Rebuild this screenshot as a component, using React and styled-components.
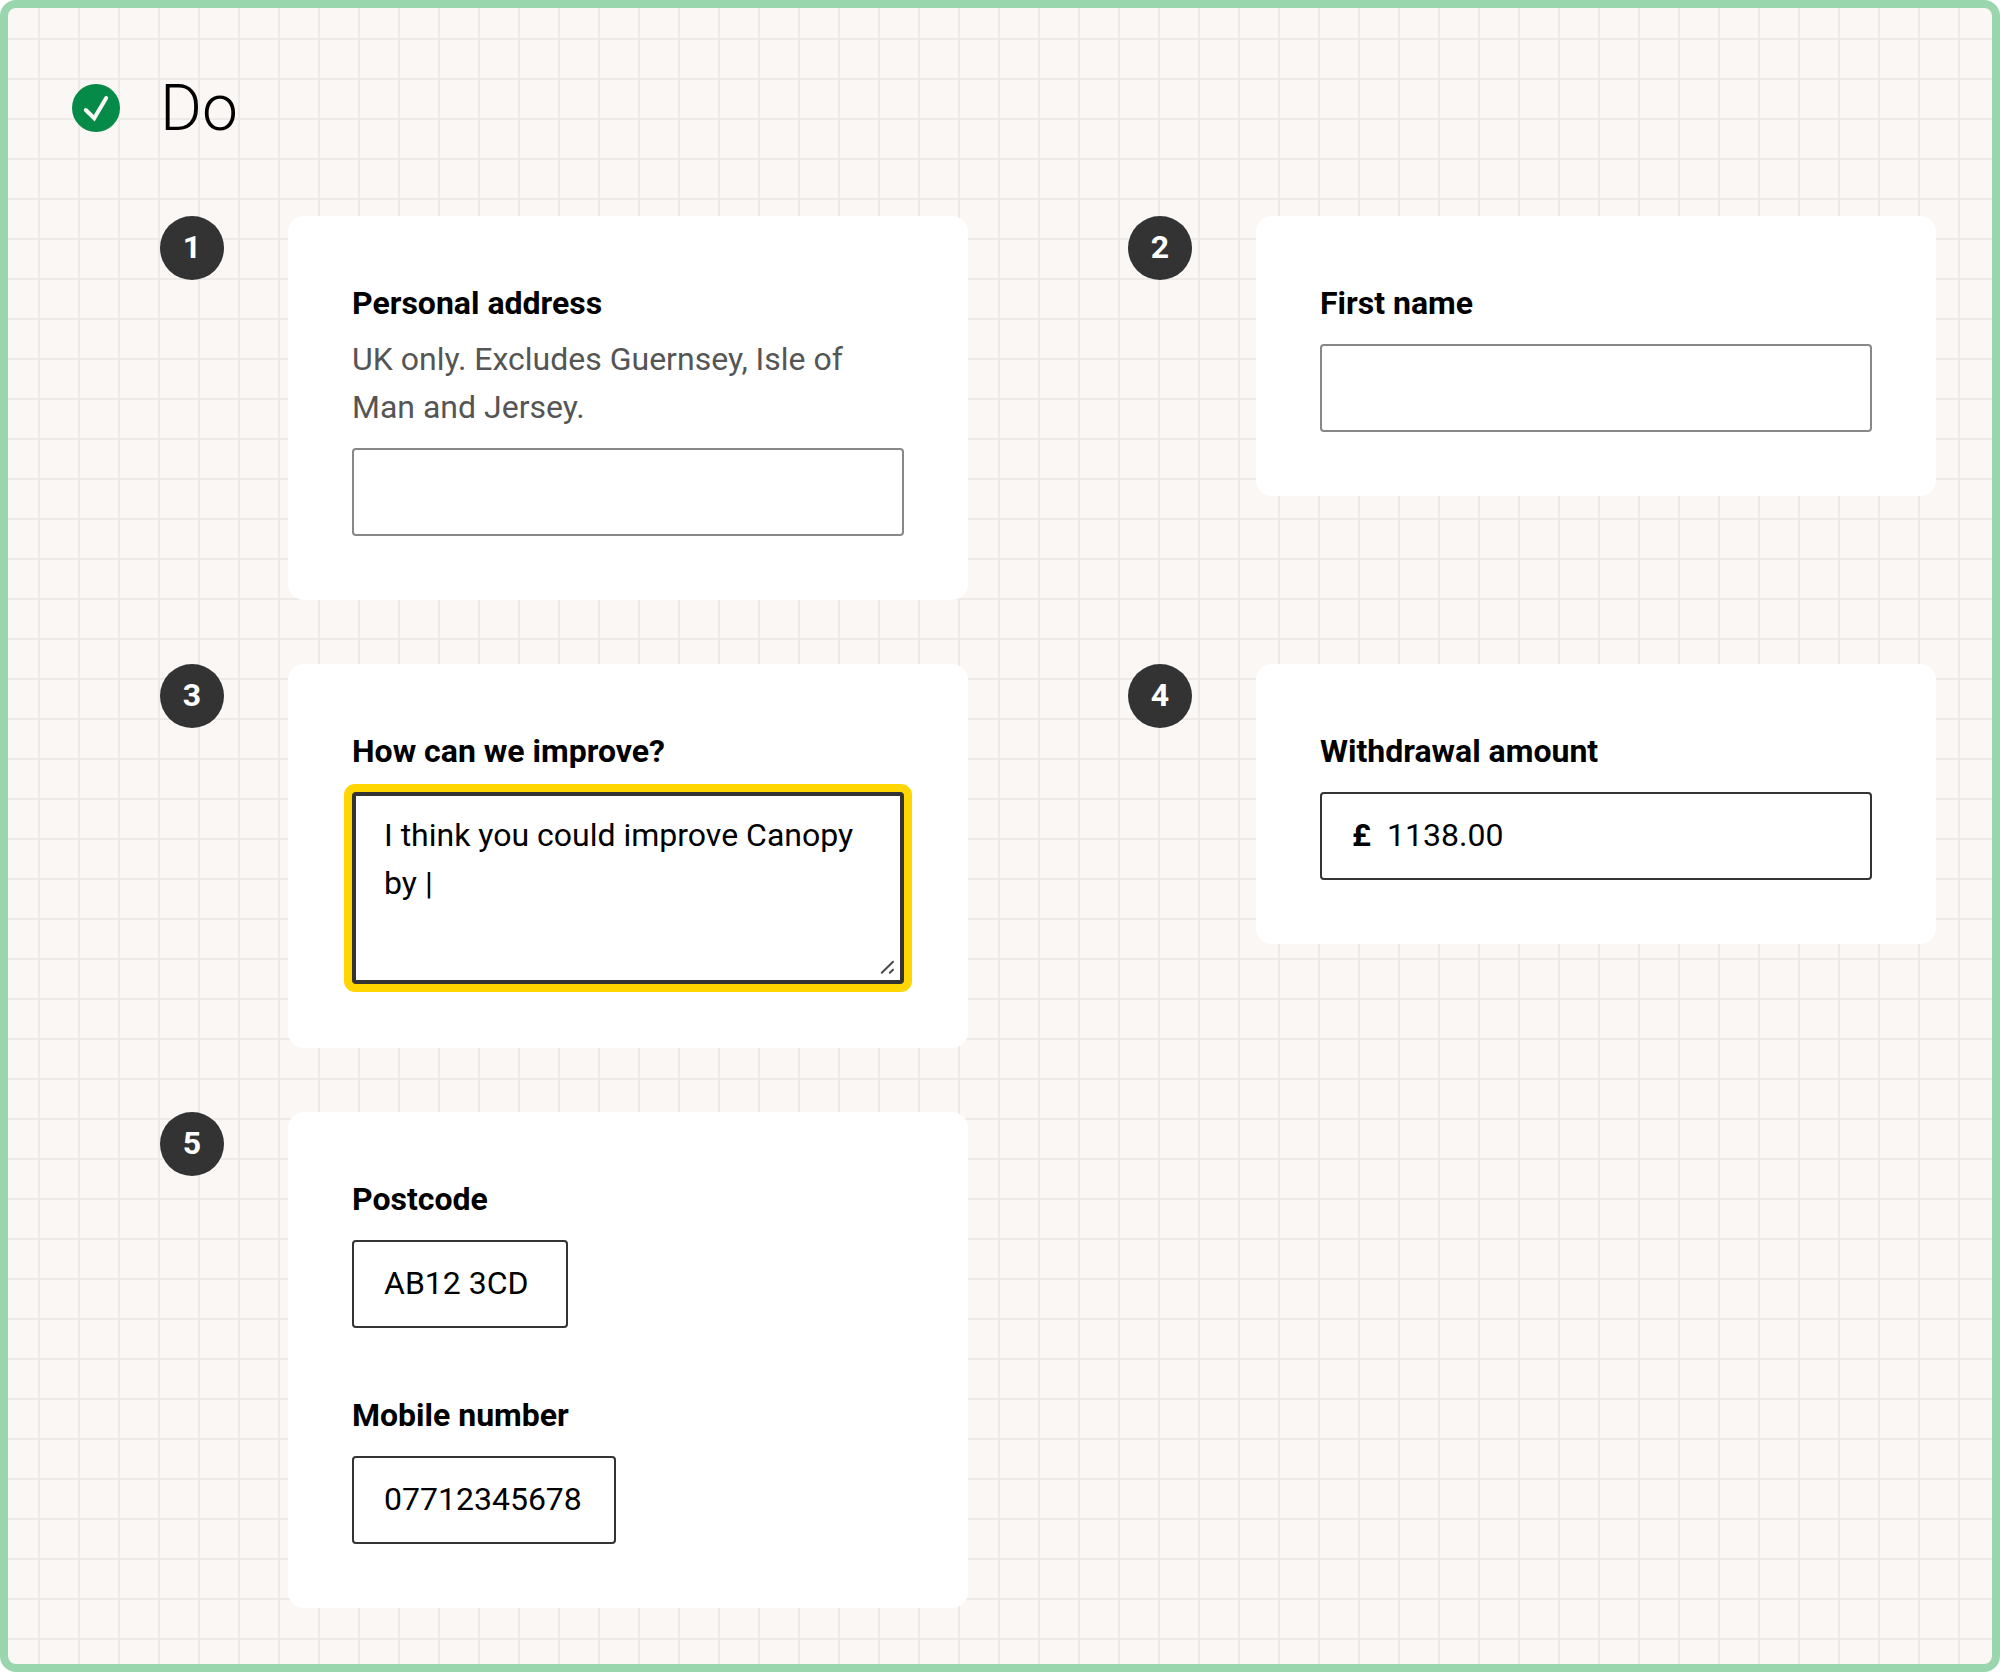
import React from "react";
import styled, { createGlobalStyle } from "styled-components";

const GlobalStyle = createGlobalStyle`
  *, *::before, *::after { box-sizing: border-box; }
  body {
    margin: 0;
    background: #fff;
    color: #000;
    font-family: Roboto, "Liberation Sans", sans-serif;
    font-size: 32px;
    line-height: 48px;
  }
`;

const Panel = styled.main`
  min-height: 100vh;
  padding: 56px 56px 56px 64px;
  border: 8px solid #99d6ad;
  border-radius: 16px;
  background-color: #fbf7f4;
  background-image:
    linear-gradient(to right, transparent 38px, #eeeae7 38px),
    linear-gradient(to bottom, transparent 38px, #eeeae7 38px);
  background-size: 40px 40px;
  background-origin: border-box;
`;

const Header = styled.header`
  display: flex;
  align-items: center;
  gap: 40px;
  margin-bottom: 64px;
`;

const Title = styled.h1`
  margin: 0;
  padding-top: 2px;
  font-size: 64px;
  line-height: 86px;
  font-weight: 300;
`;

const Examples = styled.ol`
  display: grid;
  grid-template-columns: repeat(2, minmax(0, 1fr));
  gap: 64px 160px;
  align-items: start;
  margin: 0 0 0 88px;
  padding: 0;
  list-style: none;
`;

const Example = styled.li`
  display: flex;
  align-items: flex-start;
  gap: 64px;
`;

const Marker = styled.span`
  flex: none;
  width: 64px;
  height: 64px;
  padding-bottom: 2px;
  display: grid;
  place-items: center;
  border-radius: 50%;
  background: #333;
  color: #fff;
  font-weight: 700;
`;

const Card = styled.div`
  flex: 1;
  min-width: 0;
  display: flex;
  flex-direction: column;
  gap: 63px;
  padding: 63px 64px 64px;
  border-radius: 16px;
  background: #fff;
`;

const FieldGroup = styled.div`
  display: flex;
  flex-direction: column;
`;

const Label = styled.label`
  font-weight: 700;
`;

const Hint = styled.p`
  margin: 8px 0 0;
  color: #555;
`;

const TextInput = styled.input`
  width: ${(p) => p.$width || "100%"};
  height: 88px;
  margin-top: 17px;
  padding: 0 30px 2px;
  border: 2px solid ${(p) => (p.$filled ? "#333" : "#888")};
  border-radius: 4px;
  background: #fff;
  color: inherit;
  font: inherit;
`;

const MoneyBox = styled.div`
  display: flex;
  align-items: center;
  gap: 16px;
  height: 88px;
  margin-top: 17px;
  padding: 0 30px 2px;
  border: 2px solid #333;
  border-radius: 4px;
  background: #fff;
`;

const Currency = styled.span`
  font-weight: 700;
`;

const MoneyInput = styled.input`
  flex: 1;
  min-width: 0;
  padding: 0;
  border: 0;
  outline: 0;
  background: none;
  color: inherit;
  font: inherit;
`;

const TextAreaWrap = styled.div`
  position: relative;
  display: flex;
  margin-top: 17px;
`;

const TextArea = styled.textarea`
  width: 100%;
  height: 192px;
  padding: 15px 28px;
  border: 4px solid #333;
  border-radius: 4px;
  outline: 0;
  box-shadow: 0 0 0 8px #ffd600;
  background: #fff;
  color: inherit;
  font: inherit;
  resize: none;
`;

const Grip = styled.svg`
  position: absolute;
  right: 8px;
  bottom: 8px;
  pointer-events: none;
`;

function Field({ id, label, hint, children }) {
  return (
    <FieldGroup>
      <Label htmlFor={id}>{label}</Label>
      {hint && <Hint id={`${id}-hint`}>{hint}</Hint>}
      {children}
    </FieldGroup>
  );
}

function NumberedExample({ number, children }) {
  return (
    <Example>
      <Marker>{number}</Marker>
      <Card>{children}</Card>
    </Example>
  );
}

function CheckIcon() {
  return (
    <svg width="48" height="48" viewBox="0 0 48 48" aria-hidden="true">
      <circle cx="24" cy="24" r="24" fill="#058a47" />
      <path
        d="M13.8 26 22.2 34.2 34.2 14"
        fill="none"
        stroke="#fbf7f4"
        strokeWidth="4"
        strokeLinecap="round"
      />
    </svg>
  );
}

export default function App() {
  return (
    <>
      <GlobalStyle />
      <Panel>
        <Header>
          <CheckIcon />
          <Title>Do</Title>
        </Header>
        <Examples>
          <NumberedExample number={1}>
            <Field
              id="address"
              label="Personal address"
              hint="UK only. Excludes Guernsey, Isle of Man and Jersey."
            >
              <TextInput id="address" type="text" aria-describedby="address-hint" />
            </Field>
          </NumberedExample>
          <NumberedExample number={2}>
            <Field id="first-name" label="First name">
              <TextInput id="first-name" type="text" />
            </Field>
          </NumberedExample>
          <NumberedExample number={3}>
            <Field id="improve" label="How can we improve?">
              <TextAreaWrap>
                <TextArea id="improve" defaultValue="I think you could improve Canopy by |" />
                <Grip width="16" height="16" viewBox="0 0 16 16" aria-hidden="true">
                  <path
                    d="M1.8 12.8 13 1.8M9.8 12.8 13 9.8"
                    fill="none"
                    stroke="#4a4a4a"
                    strokeWidth="2"
                    strokeLinecap="round"
                  />
                </Grip>
              </TextAreaWrap>
            </Field>
          </NumberedExample>
          <NumberedExample number={4}>
            <Field id="amount" label="Withdrawal amount">
              <MoneyBox>
                <Currency>£</Currency>
                <MoneyInput id="amount" type="text" defaultValue="1138.00" />
              </MoneyBox>
            </Field>
          </NumberedExample>
          <NumberedExample number={5}>
            <Field id="postcode" label="Postcode">
              <TextInput id="postcode" type="text" defaultValue="AB12 3CD" $filled $width="216px" />
            </Field>
            <Field id="mobile" label="Mobile number">
              <TextInput id="mobile" type="tel" defaultValue="07712345678" $filled $width="264px" />
            </Field>
          </NumberedExample>
        </Examples>
      </Panel>
    </>
  );
}
